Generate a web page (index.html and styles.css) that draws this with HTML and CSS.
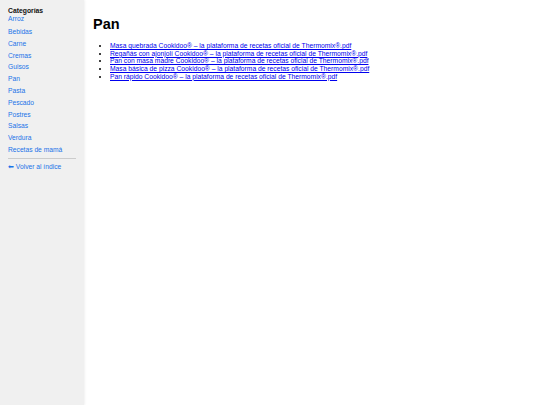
FILE: index.html
```html
<!DOCTYPE html>
<html lang="es">
<head>
<meta charset="utf-8">
<title>Pan</title>
<link rel="stylesheet" href="styles.css">
</head>
<body>
<div class="layout">
  <nav class="sidebar">
    <div class="cat-title">Categorías</div>
    <ul class="cat-list">
      <li><a href="#">Arroz</a></li>
      <li><a href="#">Bebidas</a></li>
      <li><a href="#">Carne</a></li>
      <li><a href="#">Cremas</a></li>
      <li><a href="#">Guisos</a></li>
      <li><a href="#">Pan</a></li>
      <li><a href="#">Pasta</a></li>
      <li><a href="#">Pescado</a></li>
      <li><a href="#">Postres</a></li>
      <li><a href="#">Salsas</a></li>
      <li><a href="#">Verdura</a></li>
      <li><a href="#">Recetas de mamá</a></li>
    </ul>
    <hr class="sep">
    <a class="back" href="#">⬅ Volver al índice</a>
  </nav>
  <main class="content">
    <h1 class="title">Pan</h1>
    <ul class="files">
      <li><a href="#">Masa quebrada Cookidoo® – la plataforma de recetas oficial de Thermomix®.pdf</a></li>
      <li><a href="#">Regañás con ajonjolí Cookidoo® – la plataforma de recetas oficial de Thermomix®.pdf</a></li>
      <li><a href="#">Pan con masa madre Cookidoo® – la plataforma de recetas oficial de Thermomix®.pdf</a></li>
      <li><a href="#">Masa básica de pizza Cookidoo® – la plataforma de recetas oficial de Thermomix®.pdf</a></li>
      <li><a href="#">Pan rápido Cookidoo® – la plataforma de recetas oficial de Thermomix®.pdf</a></li>
    </ul>
  </main>
</div>
</body>
</html>
```
FILE: styles.css
```css
html, body {
  margin: 0;
  padding: 0;
  height: 100%;
  background: #fff;
  font-family: "Liberation Sans", Arial, sans-serif;
}
.layout {
  display: flex;
  min-height: 100%;
}
.sidebar {
  width: 76px;
  flex: none;
  background: #f0f0f0;
  padding: 7px 0 0 8px;
  box-shadow: 1px 0 2px rgba(0,0,0,0.06);
}
.cat-title {
  font-weight: bold;
  font-size: 6.8px;
  color: #111;
  line-height: 8px;
}
.cat-list {
  list-style: none;
  margin: 0;
  padding: 0;
}
.cat-list li {
  font-size: 6.7px;
  line-height: 11.8px;
}
.cat-list li:first-child {
  line-height: 8px;
  margin-bottom: 3px;
}
.cat-list a, .back {
  color: #1a73e8;
  text-decoration: none;
}
.sep {
  border: none;
  border-top: 1px solid #ccc;
  margin: 2px 8px 3.5px 0;
}
.back {
  font-size: 6.7px;
  line-height: 9px;
  display: block;
}
.content {
  flex: 1;
  padding: 0 0 0 9px;
}
.title {
  font-size: 14.5px;
  font-weight: bold;
  margin: 16px 0 9px 0;
  line-height: 17px;
  color: #000;
}
.files {
  margin: 0;
  padding-left: 17px;
  font-size: 6.72px;
  line-height: 7.7px;
}
.files a {
  color: #0000ee;
}
```
